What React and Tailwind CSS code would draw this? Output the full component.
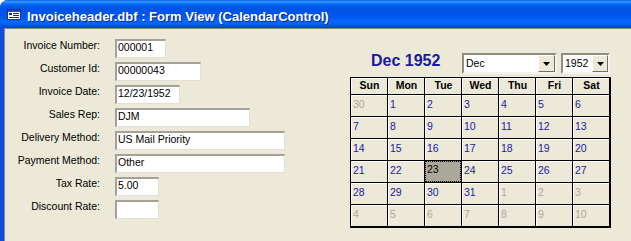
import React from 'react';

const font = { fontFamily: '"Liberation Sans", Arial, sans-serif' };

const fields = [
  { label: 'Invoice Number:', value: '000001', w: 'w-[51px]' },
  { label: 'Customer Id:', value: '00000043', w: 'w-[86px]' },
  { label: 'Invoice Date:', value: '12/23/1952', w: 'w-[65px]' },
  { label: 'Sales Rep:', value: 'DJM', w: 'w-[135px]' },
  { label: 'Delivery Method:', value: 'US Mail Priority', w: 'w-[170px]' },
  { label: 'Payment Method:', value: 'Other', w: 'w-[170px]' },
  { label: 'Tax Rate:', value: '5.00', w: 'w-[44px]' },
  { label: 'Discount Rate:', value: '', w: 'w-[44px]' },
];

const weekDays = ['Sun', 'Mon', 'Tue', 'Wed', 'Thu', 'Fri', 'Sat'];

// Dec 1952 starts on a Monday
const days = [
  { n: 30, cur: false },
  ...Array.from({ length: 31 }, (_, i) => ({ n: i + 1, cur: true })),
  ...Array.from({ length: 10 }, (_, i) => ({ n: i + 1, cur: false })),
];

const FormIcon = () => (
  <svg width="14" height="11" viewBox="0 0 14 11" className="shrink-0">
    <rect x="0.5" y="0.5" width="13" height="10" fill="#ffffff" stroke="#1b2f8a" />
    <rect x="1" y="1" width="12" height="2" fill="#2a48b8" />
    <rect x="2" y="4" width="3" height="2" fill="#1b2f8a" />
    <line x1="6" y1="4.5" x2="12" y2="4.5" stroke="#1b2f8a" />
    <line x1="6" y1="6.5" x2="12" y2="6.5" stroke="#1b2f8a" />
    <line x1="2" y1="8.5" x2="12" y2="8.5" stroke="#1b2f8a" />
  </svg>
);

const DropButton = ({ w }) => (
  <div className={`${w} h-[17px] bg-[#ece9d8] border border-t-white border-l-white border-b-[#716f64] border-r-[#716f64] flex items-center justify-center`}>
    <svg width="7" height="4" viewBox="0 0 7 4">
      <polygon points="0,0 7,0 3.5,4" fill="#000" />
    </svg>
  </div>
);

const Select = ({ value, w, btn }) => (
  <div className={`${w} h-[21px] bg-white border-2 border-t-[#8f8d85] border-l-[#8f8d85] border-b-[#f4f3ee] border-r-[#f4f3ee] flex items-center justify-between`}>
    <span className="pl-[2px] text-[10.5px] leading-[13px] text-black">{value}</span>
    <DropButton w={btn} />
  </div>
);

export default function App() {
  return (
    <div className="w-[631px] h-[241px] overflow-hidden bg-white" style={font}>
      <div className="w-full h-full rounded-tl-[8px] overflow-hidden bg-[#0b4fdc] flex flex-col">
        {/* title bar */}
        <div className="h-[28px] shrink-0 flex items-start gap-[6px] pl-[7px] pt-[9px] bg-[linear-gradient(to_bottom,#0058ee_0%,#3593ff_5%,#288eff_8%,#127dff_11%,#036ffc_14%,#0262ee_18%,#0057e5_25%,#0054e3_30%,#0055eb_56%,#005bf5_66%,#026afe_76%,#0062ef_86%,#0052d6_94%,#0046c0_100%)]">
          <FormIcon />
          <span className="text-white font-bold text-[13px] leading-[16px] whitespace-nowrap [text-shadow:1px_1px_0_#0a2a90]">
            Invoiceheader.dbf : Form View (CalendarControl)
          </span>
        </div>

        {/* body */}
        <div className="flex flex-1">
          <div className="w-[4px] shrink-0 bg-[#0b4fdc]" />
          <div className="flex-1 bg-[#ece9d8] border-t border-l border-[#8a887e] flex">
            {/* form fields */}
            <div className="w-[345px] shrink-0 pt-[10px] flex flex-col gap-[4px]">
              {fields.map((f) => (
                <div key={f.label} className="flex items-start h-[19px]">
                  <div className="w-[95px] text-right text-[10.5px] leading-[13px] text-black whitespace-nowrap">
                    {f.label}
                  </div>
                  <div className={`ml-[15px] ${f.w} h-[19px] bg-white border-t-2 border-l-2 border-t-[#a3a19a] border-l-[#a3a19a] border-b border-r border-b-[#e2e0d6] border-r-[#e2e0d6] pl-[1px] text-[10.5px] leading-[13px] text-black whitespace-nowrap overflow-hidden`}>
                    {f.value}
                  </div>
                </div>
              ))}
            </div>

            {/* calendar control */}
            <div className="pt-[24px] flex flex-col">
              <div className="flex items-start h-[21px]">
                <span className="ml-[21px] w-[91px] text-[16px] leading-[16px] font-bold text-[#1a1aa0] whitespace-nowrap">
                  Dec 1952
                </span>
                <Select value="Dec" w="w-[95px]" btn="w-[17px]" />
                <div className="ml-[4px]">
                  <Select value="1952" w="w-[49px]" btn="w-[16px]" />
                </div>
              </div>

              <div className="mt-[3px] w-fit bg-black pt-px pl-px pr-[2px] pb-[2px]">
                <div className="grid grid-cols-[repeat(7,36px)] grid-rows-[16px_repeat(6,21px)] gap-px">
                  {weekDays.map((d) => (
                    <div key={d} className="bg-[#ece9d8] border-t border-l border-white text-center font-bold text-[10.5px] leading-[13px] text-black">
                      {d}
                    </div>
                  ))}
                  {days.map((d, i) => {
                    const selected = d.cur && d.n === 23;
                    if (selected) {
                      return (
                        <div key={i} className="bg-[#aca899] border border-dotted border-black pl-[1px] pt-[1px] text-[10.5px] leading-[13px] text-black">
                          {d.n}
                        </div>
                      );
                    }
                    return (
                      <div
                        key={i}
                        className={`bg-[#ece9d8] border-t border-l border-white pl-[1px] pt-[2px] text-[10.5px] leading-[13px] ${d.cur ? 'text-[#1a1aa8]' : 'text-[#aca899]'}`}
                      >
                        {d.n}
                      </div>
                    );
                  })}
                </div>
              </div>
            </div>
          </div>
        </div>
      </div>
    </div>
  );
}
